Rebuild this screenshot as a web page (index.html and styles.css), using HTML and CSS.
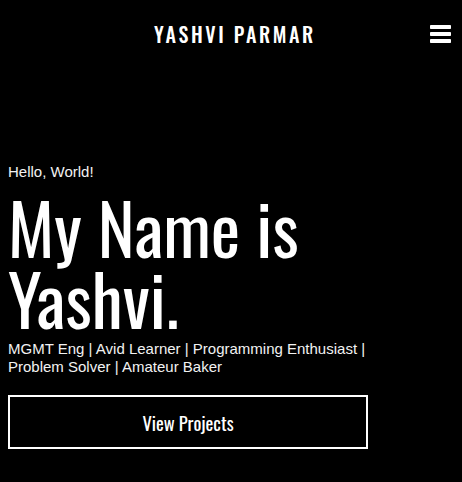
FILE: index.html
```html
<!DOCTYPE html>
<html lang="en">
<head>
<meta charset="utf-8">
<title>Yashvi Parmar</title>
<link rel="stylesheet" href="styles.css">
</head>
<body>
<header class="topbar">
  <div class="brand">YASHVI PARMAR</div>
  <button class="menu" aria-label="Menu">
    <svg width="21" height="18" viewBox="0 0 21 18"><rect x="0" y="0" width="21" height="4" rx="0.8" fill="#fff"/><rect x="0" y="7" width="21" height="4" rx="0.8" fill="#fff"/><rect x="0" y="14" width="21" height="4" rx="0.8" fill="#fff"/></svg>
  </button>
</header>
<main class="hero">
  <p class="hello">Hello, World!</p>
  <h1 class="name">My Name is Yashvi.</h1>
  <p class="tagline">MGMT Eng | Avid Learner | Programming Enthusiast | Problem Solver | Amateur Baker</p>
  <a class="cta" href="#projects">View Projects</a>
</main>
</body>
</html>
```
FILE: styles.css
```css
html,body{background:#000;}
body{margin:0;color:#fff;font-family:"Liberation Sans",Arial,sans-serif;}
.topbar{display:flex;align-items:center;justify-content:center;height:68px;position:relative;}
.brand{font-family:"Oswald",sans-serif;font-weight:500;font-size:20px;letter-spacing:2.6px;padding-left:8px;}
.menu{position:absolute;right:11px;top:25px;background:none;border:0;padding:0;display:flex;cursor:pointer;}
.hero{padding:95px 8px 0;}
.hello{margin:0;font-size:15px;line-height:18px;color:#f2f2f2;}
.name{margin:10px 0 0;font-family:"Oswald",sans-serif;font-weight:400;font-size:70px;line-height:71px;}
.tagline{margin:7px 0 0;font-size:15px;line-height:18px;max-width:370px;color:#f2f2f2;}
.cta{display:flex;justify-content:center;align-items:center;box-sizing:border-box;width:360px;height:54px;margin-top:19px;border:2px solid #fff;color:#fff;text-decoration:none;font-family:"Oswald",sans-serif;font-size:18.5px;}
```
